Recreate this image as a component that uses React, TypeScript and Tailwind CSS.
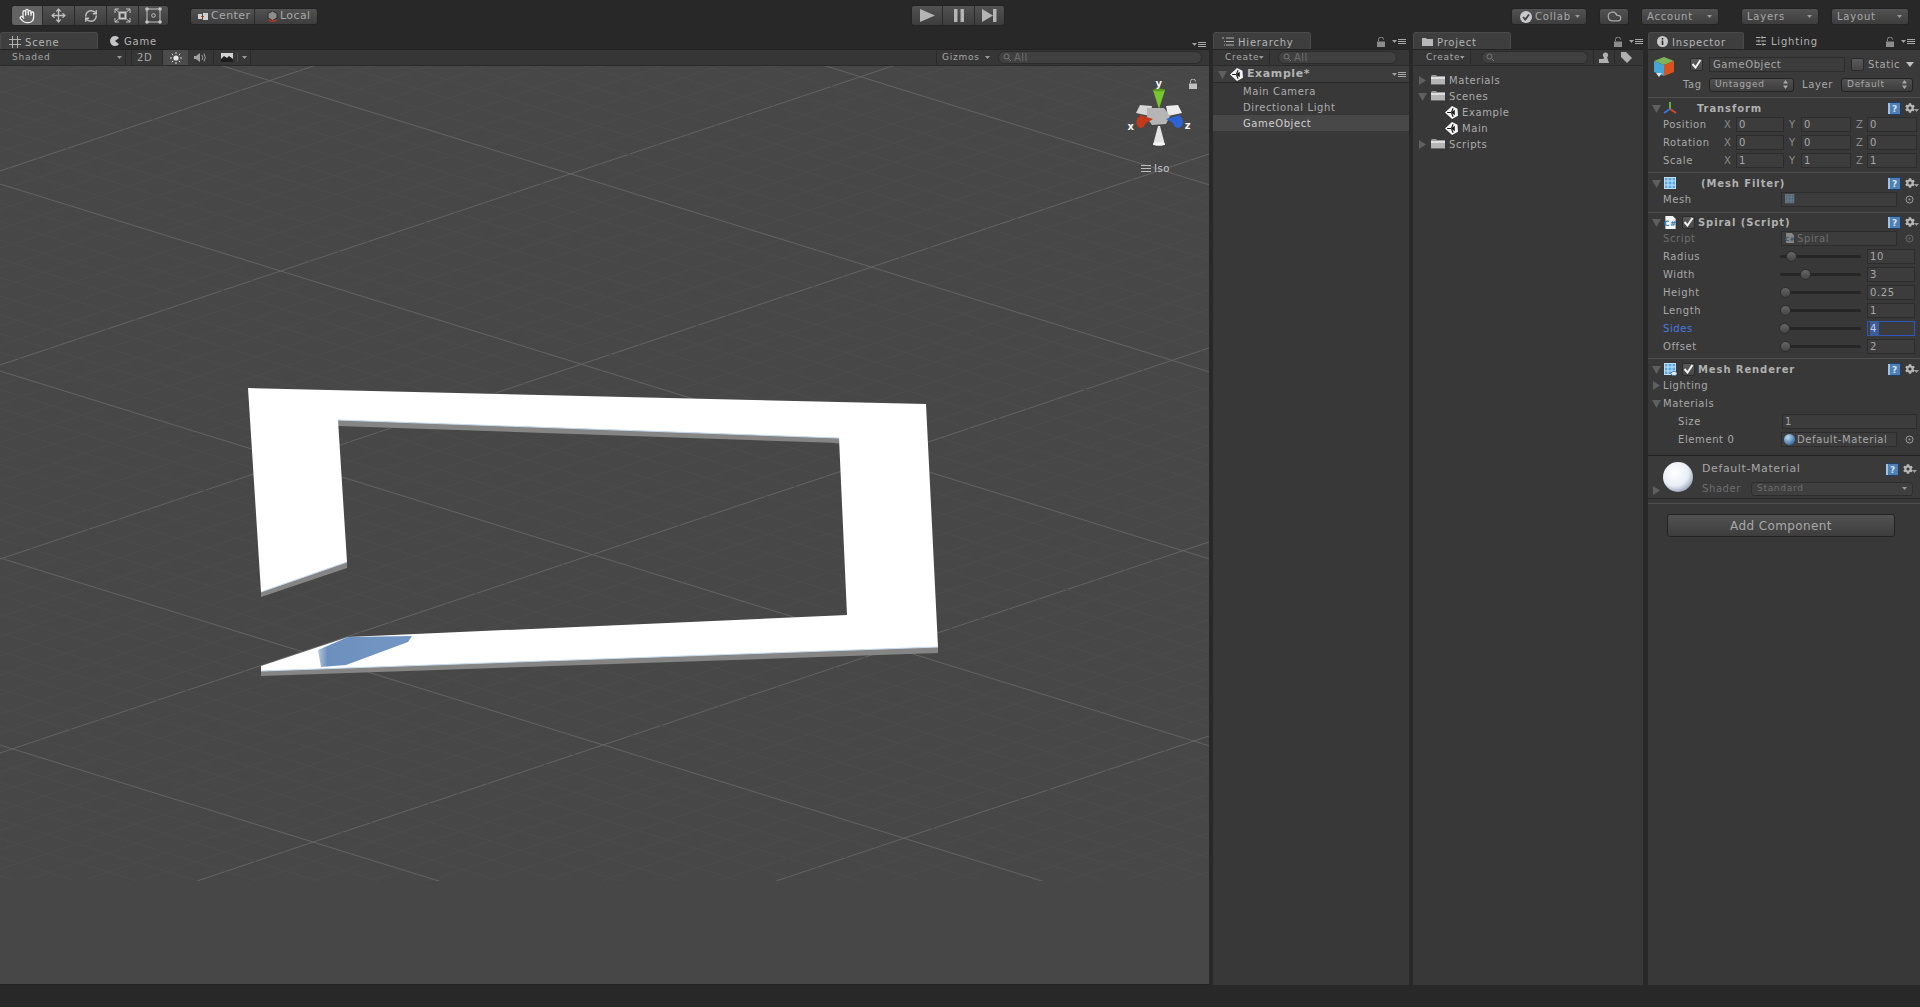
import React from 'react';
import { Hand, Move, RefreshCw, Cloud, SlidersHorizontal } from 'lucide-react';
import { FaCog } from 'react-icons/fa';

const btn = 'bg-gradient-to-b from-[#525252] to-[#3d3d3d] border border-[#232323] rounded-[3px]';

const LockIcon = ({ color = '#8c8c8c' }: { color?: string }) => (
  <svg width="8" height="10" viewBox="0 0 8 10">
    <path d="M1.5 4V2.5a2.5 2.5 0 0 1 5 0" fill="none" stroke={color} strokeWidth="1" />
    <rect x="0" y="4.5" width="8" height="5.5" fill={color} />
  </svg>
);

const MenuIcon = () => (
  <svg width="14" height="7" viewBox="0 0 14 7">
    <polygon points="0,2 5,2 2.5,5" fill="#a0a0a0" />
    <rect x="6" y="1" width="8" height="1" fill="#a8a8a8" />
    <rect x="6" y="3" width="8" height="1" fill="#a8a8a8" />
    <rect x="6" y="5" width="8" height="1" fill="#a8a8a8" />
  </svg>
);

const Caret = ({ className = '' }: { className?: string }) => (
  <svg width="5" height="3" viewBox="0 0 5 3" className={className}>
    <polygon points="0,0 5,0 2.5,3" fill="#9a9a9a" />
  </svg>
);

const UpDown = () => (
  <svg width="5" height="9" viewBox="0 0 5 9" className="ml-auto shrink-0">
    <polygon points="2.5,0 5,3.5 0,3.5" fill="#a8a8a8" />
    <polygon points="0,5.5 5,5.5 2.5,9" fill="#a8a8a8" />
  </svg>
);

const Arrow = ({ open = false }: { open?: boolean }) => (
  <svg width="9" height="9" viewBox="0 0 9 9" className="shrink-0">
    {open ? <polygon points="0,1 9,1 4.5,9" fill="#5f5f5f" /> : <polygon points="1,0 8,4.5 1,9" fill="#5f5f5f" />}
  </svg>
);

const UnityIcon = () => (
  <svg width="13" height="13" viewBox="0 0 24 24" className="shrink-0">
    <polygon points="13,0 23,5 24,18 13,24 0,12" fill="#f4f4f4" />
    <polygon points="11,12 18,7 18,17" fill="#161616" />
    <path d="M12 11 L15 4 M12 13 L15 20 M4 12 H11" stroke="#161616" strokeWidth="2" />
  </svg>
);

const FolderIcon = () => (
  <svg width="14" height="12" viewBox="0 0 14 12" className="shrink-0">
    <path d="M0 2 L1 1 H5 L6 2 H14 V3 H0Z" fill="#9a9a9a" />
    <rect x="0" y="3" width="14" height="8" fill="#b5b5b5" />
    <rect x="0" y="3" width="14" height="2" fill="#e0e0e0" />
    <rect x="0" y="10" width="14" height="1" fill="#6c6c6c" />
  </svg>
);

const HelpIcon = () => (
  <svg width="13" height="13" viewBox="0 0 13 13" className="shrink-0">
    <rect x="0" y="0" width="13" height="13" rx="1" fill="#1f3f68" />
    <rect x="2" y="1" width="10" height="11" fill="#4f7fb4" />
    <rect x="0" y="1" width="2" height="11" fill="#9fc2e4" />
    <text x="7" y="10" fontSize="9" fontWeight="700" fill="#d5e4f2" textAnchor="middle">?</text>
  </svg>
);

const Gear = () => (
  <div className="flex items-end w-[14px] shrink-0">
    <FaCog size={10} color="#b8b8b8" />
    <Caret className="mb-[1px] -ml-[1px]" />
  </div>
);

const CheckBox = ({ checked = true, className = '' }: { checked?: boolean; className?: string }) => (
  <div className={`w-[13px] h-[13px] shrink-0 rounded-[2px] bg-gradient-to-b from-[#5a5a5a] to-[#474747] border border-[#2a2a2a] flex items-center justify-center ${className}`}>
    {checked && (
      <svg width="11" height="10" viewBox="0 0 11 10">
        <path d="M1.5 5 L4.5 8.5 L9.5 1" fill="none" stroke="#f0f0f0" strokeWidth="2" />
      </svg>
    )}
  </div>
);

const CubeIcon = () => (
  <svg width="21" height="22" viewBox="0 0 21 22">
    <polygon points="10,0 20,4 10,8 0,4" fill="#7fb35a" />
    <polygon points="0,4 10,8 10,19 0,15" fill="#45a7d8" />
    <polygon points="10,8 20,4 20,15 10,19" fill="#d8531f" />
    <polygon points="2,16 8,16 5,20" fill="#e0e0e0" />
  </svg>
);

const TransformIcon = () => (
  <svg width="14" height="14" viewBox="0 0 14 14" className="shrink-0">
    <path d="M7 8 V1" stroke="#63b33a" strokeWidth="2" />
    <path d="M7 8 L13 12" stroke="#d24a26" strokeWidth="2" />
    <path d="M7 8 L1 12" stroke="#3f6fd8" strokeWidth="2" />
  </svg>
);

const MeshIcon = ({ eye = false, size = 13, className = '' }: { eye?: boolean; size?: number; className?: string }) => (
  <svg width={size} height={size} viewBox="0 0 13 13" className={`shrink-0 ${className}`}>
    <rect x="0.5" y="0.5" width="11" height="11" fill="#5aa6dc" stroke="#b9def5" />
    <path d="M4 1V11M8 1V11M1 4H11M1 8H11" stroke="#c6e6fa" strokeWidth="1" />
    {eye && <ellipse cx="10" cy="10.5" rx="3" ry="2" fill="#e8f4fc" stroke="#2f5f88" strokeWidth="0.7" />}
  </svg>
);

const ScriptIcon = ({ size = 13, className = '' }: { size?: number; className?: string }) => (
  <svg width={size} height={size} viewBox="0 0 13 14" className={`shrink-0 ${className}`}>
    <path d="M1 0 H9 L12 3 V14 H1Z" fill="#f4f4f4" />
    <text x="6.5" y="11" fontSize="8" fontWeight="700" fill="#2f7fb8" textAnchor="middle">C#</text>
  </svg>
);

const TargetDot = ({ dim = false }: { dim?: boolean }) => (
  <svg width="9" height="9" viewBox="0 0 9 9" className={dim ? 'shrink-0 opacity-50' : 'shrink-0'}>
    <circle cx="4.5" cy="4.5" r="3.5" fill="none" stroke="#a0a0a0" />
    <circle cx="4.5" cy="4.5" r="1" fill="#a0a0a0" />
  </svg>
);

const TopButton = ({ label, w, ml, icon }: { label: string; w: string; ml: string; icon?: React.ReactNode }) => (
  <div className={`${btn} ${w} ${ml} h-[17px] mt-[8px] flex items-center pl-[5px] pr-[6px] text-[#a8a8a8] tracking-[0.8px]`}>
    {icon}
    <span>{label}</span>
    <Caret className="ml-auto" />
  </div>
);

const Tab = ({ label, icon, active = false, w = 'w-[98px]' }: { label: string; icon: React.ReactNode; active?: boolean; w?: string }) => (
  <div className={`${w} h-[17px] flex items-center gap-[4px] pl-[8px] pt-[1px] text-[#b4b4b4] tracking-[0.8px] rounded-t-[3px] ${active ? 'bg-[#3e3e3e] border-t border-x border-[#4a4a4a]' : ''}`}>
    {icon}
    <span className="pt-[1px]">{label}</span>
  </div>
);

const Search = ({ className, children }: { className: string; children?: React.ReactNode }) => (
  <div className={`h-[13px] rounded-full bg-[#404040] border border-[#2b2b2b] flex items-center pl-[4px] gap-[1px] text-[#6f6f6f] ${className}`}>
    <svg width="10" height="9" viewBox="0 0 10 9" className="shrink-0">
      <circle cx="3.5" cy="3.5" r="2.5" fill="none" stroke="#7a7a7a" />
      <path d="M5.5 5.5 L8 8" stroke="#7a7a7a" />
    </svg>
    {children}
  </div>
);

const PanelHead = ({ tabs, pr = 'pr-[3px]' }: { tabs: React.ReactNode; pr?: string }) => (
  <div className={`h-[17px] flex items-center shrink-0 bg-[#282828] ${pr}`}>
    {tabs}
    <div className="ml-auto flex items-center gap-[7px] pt-[2px]">
      <LockIcon />
      <MenuIcon />
    </div>
  </div>
);

const Toolbar = ({ children }: { children: React.ReactNode }) => (
  <div className="h-[17px] shrink-0 flex items-center bg-[#363636] border-t border-[#222] border-b-[1px] border-b-[#2a2a2a] text-[#a6a6a6] text-[9px] tracking-[0.75px]">
    {children}
  </div>
);

// scene grid is a perspective floor, flattened to two line families
const SLOPE_A = -0.335;
const SLOPE_B = 0.31;

const GridLines = () => {
  const lines: React.ReactNode[] = [];
  for (let i = -60; i < 110; i++) {
    const c = 171 + i * 19.4;
    const major = i % 10 === 0;
    lines.push(
      <line key={`a${i}`} x1="0" y1={c} x2="1209" y2={c + SLOPE_A * 1209} stroke={major ? '#646464' : '#4c4c4c'} />
    );
  }
  for (let i = -60; i < 110; i++) {
    const c = -3 + i * 18.7;
    const major = i % 10 === 0;
    lines.push(
      <line key={`b${i}`} x1="0" y1={c} x2="1209" y2={c + SLOPE_B * 1209} stroke={major ? '#646464' : '#4c4c4c'} />
    );
  }
  return <g clipPath="url(#floor)">{lines}</g>;
};

const SpiralMesh = () => (
  <g>
    <defs>
      <linearGradient id="shade" x1="0" x2="1" y1="0" y2="0">
        <stop offset="0" stopColor="#b4c6de" />
        <stop offset="0.1" stopColor="#6d8fbd" />
        <stop offset="1" stopColor="#7397c4" />
      </linearGradient>
    </defs>
    {/* under edges */}
    <polygon points="338,420 839,438 839,443 338,426" fill="#858585" />
    <polygon points="261,592 347,562 347,568 261,597" fill="#858585" />
    <polygon points="261,671 938,647 938,653 261,676" fill="#858585" />
    {/* ribbon */}
    <polygon
      points="248,388 926,404 938,647 261,671 261,666 348,637 847,615 839,438 338,420 347,562 261,592"
      fill="#ffffff"
    />
    <line x1="338" y1="420" x2="839" y2="438" stroke="#c8dcf0" />
    <line x1="261" y1="592" x2="347" y2="562" stroke="#c8dcf0" />
    <line x1="261" y1="671" x2="938" y2="647" stroke="#c8dcf0" />
    {/* shadow on bottom strip */}
    <polygon points="348,637 412,636 408,642 346,665 321,667 318,650" fill="url(#shade)" />
  </g>
);

const Gizmo = () => (
  <svg width="70" height="70" viewBox="1125 78 70 70" className="absolute left-[1125px] top-[12px]">
    <polygon points="1140,105 1152,106 1150,116 1136,113" fill="#d6d6d6" />
    <polygon points="1178,105 1166,106 1168,116 1182,113" fill="#ececec" />
    <polygon points="1153,90 1165,90 1159,109" fill="#79c52f" />
    <ellipse cx="1159" cy="90" rx="6" ry="1.5" fill="#5a9b24" />
    <polygon points="1153,145 1165,145 1160,126 1158,126" fill="#e4e4e4" />
    <ellipse cx="1159" cy="144" rx="6" ry="1.8" fill="#f5f5f5" />
    <polygon points="1147,108 1164,108 1170,116 1166,124 1152,125 1147,118" fill="#b5b5b5" />
    <polygon points="1153,119 1140,115 1140,127" fill="#c23a1c" />
    <ellipse cx="1141" cy="122" rx="4.5" ry="6" fill="#c23a1c" />
    <polygon points="1166,119 1180,115 1180,127" fill="#2d63d0" />
    <ellipse cx="1178" cy="122" rx="5" ry="6" fill="#2d63d0" />
    <text x="1159" y="87" fontSize="10" fontWeight="700" fill="#f4f4f4" textAnchor="middle">y</text>
    <text x="1131" y="130" fontSize="10" fontWeight="700" fill="#f4f4f4" textAnchor="middle">x</text>
    <text x="1188" y="129" fontSize="10" fontWeight="700" fill="#f4f4f4" textAnchor="middle">z</text>
  </svg>
);

const ScenePanel = () => (
  <div className="w-[1209px] flex flex-col shrink-0">
    <div className="h-[17px] flex shrink-0 bg-[#282828]">
      <Tab
        active
        label="Scene"
        icon={
          <svg width="12" height="12" viewBox="0 0 12 12">
            <path d="M3.5 0V12M8.5 0V12M0 3.5H12M0 8.5H12" stroke="#b0b0b0" />
          </svg>
        }
      />
      <div className="ml-[4px]">
        <Tab
          label="Game"
          icon={
            <svg width="10" height="10" viewBox="0 0 10 10">
              <path d="M9 2 A5 5 0 1 0 9 8 L5 5Z" fill="#c4c4c4" />
            </svg>
          }
        />
      </div>
      <div className="ml-auto pr-[3px] pt-[9px]"><MenuIcon /></div>
    </div>
    <Toolbar>
      <div className="w-[126px] h-full flex items-center pl-[12px] pr-[3px] border-r border-[#2a2a2a]">
        <span>Shaded</span>
        <Caret className="ml-auto" />
      </div>
      <div className="w-[32px] ml-[5px] h-full flex items-center pl-[5px] border-x border-[#2a2a2a] text-[10px]">2D</div>
      <div className="w-[25px] h-full flex items-center justify-center bg-[#4b4b4b]">
        <svg width="12" height="12" viewBox="0 0 12 12">
          <circle cx="6" cy="6" r="2.6" fill="#e6e6e6" />
          <path d="M6 0V2M6 10V12M0 6H2M10 6H12M1.8 1.8L3.2 3.2M8.8 8.8L10.2 10.2M1.8 10.2L3.2 8.8M8.8 3.2L10.2 1.8" stroke="#dcdcdc" />
        </svg>
      </div>
      <div className="w-[26px] h-full flex items-center justify-center border-r border-[#2a2a2a]">
        <svg width="13" height="11" viewBox="0 0 13 11">
          <path d="M0 4H2L6 1V10L2 7H0Z" fill="#a0a0a0" />
          <path d="M8 3Q9.5 5.5 8 8M10 1.5Q12.5 5.5 10 9.5" fill="none" stroke="#a0a0a0" />
        </svg>
      </div>
      <div className="w-[37px] h-full flex items-center pl-[7px] border-r border-[#2a2a2a]">
        <svg width="12" height="9" viewBox="0 0 12 9">
          <rect width="12" height="9" fill="#d2d2d2" />
          <path d="M0 9V6L3 3L6 5L8 3L12 6V9Z" fill="#1d1d1d" />
        </svg>
        <div className="w-px h-[9px] bg-[#4e4e4e] mx-[4px]" />
        <Caret />
      </div>
      <div className="ml-auto w-[54px] h-full flex items-center pl-[5px] border-l border-[#2a2a2a]">
        <span>Gizmos</span>
        <Caret className="ml-[5px]" />
      </div>
      <div className="ml-[8px] mr-[7px]"><Search className="w-[204px]"><span className="text-[10px] tracking-[0.4px]">All</span></Search></div>
    </Toolbar>
    <div className="relative flex-1 bg-[#474747] overflow-hidden border-b border-[#222]">
      <svg width="1209" height="919" viewBox="0 66 1209 919" className="block">
        <defs>
          <clipPath id="floor">
            <rect x="0" y="66" width="1209" height="815" />
          </clipPath>
        </defs>
        <GridLines />
        <SpiralMesh />
      </svg>
      <Gizmo />
      <div className="absolute left-[1189px] top-[13px]"><LockIcon color="#c0c0c0" /></div>
      <div className="absolute left-[1141px] top-[95px] flex items-center gap-[3px] text-[#c4c4c4]">
        <div className="w-[10px] h-[7px] border-y border-[#bdbdbd] flex items-center"><div className="w-full h-px bg-[#bdbdbd]" /></div>
        <span>Iso</span>
      </div>
    </div>
  </div>
);

const HierarchyPanel = () => (
  <div className="w-[196px] ml-[4px] flex flex-col shrink-0 bg-[#383838]">
    <PanelHead
      tabs={
        <Tab
          active
          label="Hierarchy"
          icon={
            <svg width="12" height="9" viewBox="0 0 12 9">
              <path d="M0 1H2M4 1H12M2 4.5H3M4 4.5H12M2 8H3M4 8H12" stroke="#b0b0b0" />
            </svg>
          }
        />
      }
    />
    <Toolbar>
      <div className="w-[57px] h-full flex items-center pl-[12px] pr-[5px] border-r border-[#2a2a2a]">
        <span>Create</span>
        <Caret className="ml-auto" />
      </div>
      <Search className="w-[119px] ml-[8px]"><span className="text-[10px] tracking-[0.4px]">All</span></Search>
    </Toolbar>
    <div className="h-[17px] pt-[1px] flex items-center pl-[5px] pr-[3px] bg-[#3d3d3d] border-b border-[#262626] text-[#b4b4b4]">
      <Arrow open />
      <div className="ml-[3px] mr-[4px]"><UnityIcon /></div>
      <span className="font-bold text-[11px]">Example*</span>
      <div className="ml-auto"><MenuIcon /></div>
    </div>
    {['Main Camera', 'Directional Light', 'GameObject'].map((name, i) => (
      <div key={name} className={`h-[16px] flex items-center pl-[30px] ${i === 2 ? 'bg-[#484848] text-[#cfcfcf]' : 'text-[#acacac]'}`}>
        {name}
      </div>
    ))}
  </div>
);

const ProjectRow = ({ label, open, leaf }: { label: string; open?: boolean; leaf?: boolean }) => (
  <div className={`h-[16px] flex items-center ${leaf ? 'pl-[32px] gap-[4px]' : 'pl-[5px] gap-[4px]'} text-[#acacac]`}>
    {leaf ? <UnityIcon /> : <Arrow open={open} />}
    {!leaf && <FolderIcon />}
    <span>{label}</span>
  </div>
);

const ProjectPanel = () => (
  <div className="w-[230px] ml-[4px] flex flex-col shrink-0 bg-[#383838]">
    <PanelHead
      pr="pr-[0px]"
      tabs={
        <Tab
          active
          label="Project"
          icon={
            <svg width="11" height="9" viewBox="0 0 11 9">
              <path d="M0 1H4L5 2H11V9H0Z" fill="#b8b8b8" />
            </svg>
          }
        />
      }
    />
    <Toolbar>
      <div className="w-[58px] h-full flex items-center pl-[13px] pr-[5px] border-r border-[#2a2a2a]">
        <span>Create</span>
        <Caret className="ml-auto" />
      </div>
      <Search className="w-[107px] ml-[10px]" />
      <div className="ml-[5px] w-[22px] h-full flex items-center justify-center border-x border-[#2a2a2a]">
        <svg width="11" height="11" viewBox="0 0 11 11">
          <circle cx="6.5" cy="3" r="2.6" fill="#b0b0b0" />
          <path d="M3 11L5 5H8L10 11Z" fill="#b0b0b0" />
          <rect x="0" y="7" width="4" height="4" fill="#b0b0b0" />
        </svg>
      </div>
      <div className="w-[22px] h-full flex items-center justify-center">
        <svg width="11" height="11" viewBox="0 0 11 11">
          <path d="M0 0H5L11 6L6 11L0 5Z" fill="#b0b0b0" />
        </svg>
      </div>
    </Toolbar>
    <div className="pt-[6px]">
      <ProjectRow label="Materials" />
      <ProjectRow label="Scenes" open />
      <ProjectRow label="Example" leaf />
      <ProjectRow label="Main" leaf />
      <ProjectRow label="Scripts" />
    </div>
  </div>
);

const Field = ({ value, className = '', dim = false }: { value?: React.ReactNode; className?: string; dim?: boolean }) => (
  <div className={`h-[15px] flex items-center px-[2px] bg-[#3c3c3c] border border-[#2c2c2c] ${dim ? 'text-[#6e6e6e]' : 'text-[#a8a8a8]'} ${className}`}>
    {value}
  </div>
);

const XYZ = ({ label, x, y, z }: { label: string; x: string; y: string; z: string }) => (
  <div className="h-[18px] flex items-center pl-[15px] text-[#a8a8a8]">
    <span className="w-[61px]">{label}</span>
    <span className="w-[12px] text-[#8c8c8c]">X</span>
    <Field value={x} className="w-[48px]" />
    <span className="w-[17px] pl-[5px] text-[#8c8c8c]">Y</span>
    <Field value={y} className="w-[50px]" />
    <span className="w-[16px] pl-[5px] text-[#8c8c8c]">Z</span>
    <Field value={z} className="w-[50px]" />
  </div>
);

const CompHeader = ({ icon, check, title, pt = 'pt-[3px]', h = 'h-[17px]', titleMl = 'ml-[20px]' }: { icon: React.ReactNode; check?: boolean; title: string; pt?: string; h?: string; titleMl?: string }) => (
  <div className={`${h} ${pt} flex items-center pl-[4px] pr-[1px]`}>
    <Arrow open />
    <div className="ml-[2px] w-[14px] flex justify-center">{icon}</div>
    {check && <CheckBox className="ml-[5px]" />}
    <span className={`font-bold text-[#b0b0b0] tracking-[0.9px] ${titleMl}`}>{title}</span>
    <div className="ml-auto flex items-center gap-[4px]">
      <HelpIcon />
      <Gear />
    </div>
  </div>
);

const ObjectRow = ({ label, value, dim = false, icon }: { label: string; value?: string; dim?: boolean; icon?: React.ReactNode }) => (
  <div className="h-[18px] flex items-center pl-[15px]">
    <span className={`w-[118px] ${dim ? 'text-[#6e6e6e]' : 'text-[#a8a8a8]'}`}>{label}</span>
    <Field
      dim={dim}
      className="w-[116px]"
      value={
        <span className="flex items-center gap-[2px] pl-[1px]">
          {icon}
          {value}
        </span>
      }
    />
    <div className="ml-[8px]"><TargetDot dim={dim} /></div>
  </div>
);

const SliderRow = ({ label, value, thumb, selected = false }: { label: string; value: string; thumb: number; selected?: boolean }) => (
  <div className="h-[18px] flex items-center pl-[15px]">
    <span className={`w-[117px] ${selected ? 'text-[#4a78e0]' : 'text-[#a8a8a8]'}`}>{label}</span>
    <div className="relative w-[81px] h-[3px] rounded-full bg-[#262626]">
      <div
        className="absolute top-[-4px] w-[11px] h-[11px] rounded-full bg-gradient-to-b from-[#666] to-[#454545] border border-[#2c2c2c]"
        style={{ left: thumb }}
      />
    </div>
    <Field
      className={`w-[48px] ml-[6px] ${selected ? 'border-[#2f55c0]' : ''}`}
      value={selected ? <span className="bg-[#3c5c9c] text-[#c4cfe4] pr-[2px]">{value}</span> : value}
    />
  </div>
);

const PlainRow = ({ label, value, open, arrow = false }: { label: string; value?: string; open?: boolean; arrow?: boolean }) => (
  <div className="h-[18px] flex items-center pl-[4px] text-[#a8a8a8]">
    {arrow ? <Arrow open={open} /> : <div className="w-[9px]" />}
    <span className={arrow ? 'ml-[2px]' : 'ml-[17px] w-[104px]'}>{label}</span>
    {value && <Field value={value} className="w-[135px]" />}
  </div>
);

const MaterialDot = () => (
  <svg width="11" height="11" viewBox="0 0 11 11" className="shrink-0">
    <defs>
      <radialGradient id="dot" cx="0.35" cy="0.3" r="0.8">
        <stop offset="0" stopColor="#b9dcf4" />
        <stop offset="1" stopColor="#2c5f94" />
      </radialGradient>
    </defs>
    <circle cx="5.5" cy="5.5" r="5.5" fill="url(#dot)" />
  </svg>
);

const InspectorPanel = () => (
  <div className="w-[272px] ml-[5px] flex flex-col shrink-0 bg-[#383838]">
    <div className="h-[17px] flex items-center shrink-0 bg-[#282828] pr-[5px]">
      <Tab
        active
        w="w-[96px]"
        label="Inspector"
        icon={
          <svg width="11" height="11" viewBox="0 0 11 11">
            <circle cx="5.5" cy="5.5" r="5.5" fill="#c8c8c8" />
            <rect x="4.7" y="2" width="1.6" height="1.6" fill="#282828" />
            <rect x="4.7" y="4.5" width="1.6" height="4.5" fill="#282828" />
          </svg>
        }
      />
      <div className="ml-[3px]">
        <Tab label="Lighting" w="w-[100px]" icon={<SlidersHorizontal size={12} color="#b4b4b4" />} />
      </div>
      <div className="ml-auto flex items-center gap-[7px] pt-[2px]">
        <LockIcon />
        <MenuIcon />
      </div>
    </div>
    {/* object header */}
    <div className="h-[49px] shrink-0 border-t border-[#222] border-b border-b-[#505050] flex pl-[6px] bg-[#3a3a3a]">
      <div className="pt-[7px]"><CubeIcon /></div>
      <div className="ml-[8px] flex flex-col">
        <div className="flex items-center h-[14px] mt-[7px] pl-[7px]">
          <CheckBox />
          <div className="w-[136px] h-[15px] ml-[6px] flex items-center px-[3px] bg-[#3c3c3c] border border-[#2c2c2c] text-[#a8a8a8]">GameObject</div>
          <CheckBox checked={false} className="ml-[6px]" />
          <span className="ml-[4px] text-[#a8a8a8]">Static</span>
          <svg width="8" height="5" viewBox="0 0 8 5" className="ml-[6px]"><polygon points="0,0 8,0 4,5" fill="#c0c0c0" /></svg>
        </div>
        <div className="flex items-center mt-[6px] text-[#a8a8a8]">
          <span className="w-[20px]">Tag</span>
          <div className={`${btn} w-[85px] h-[14px] ml-[6px] flex items-center px-[5px] text-[9px] tracking-[0.7px]`}>
            <span>Untagged</span>
            <UpDown />
          </div>
          <span className="ml-[8px] w-[31px]">Layer</span>
          <div className={`${btn} w-[72px] h-[14px] ml-[8px] flex items-center px-[5px] text-[9px] tracking-[0.7px]`}>
            <span>Default</span>
            <UpDown />
          </div>
        </div>
      </div>
    </div>
    {/* transform */}
    <div className="pb-[3px]">
      <CompHeader icon={<TransformIcon />} title="Transform" />
      <XYZ label="Position" x="0" y="0" z="0" />
      <XYZ label="Rotation" x="0" y="0" z="0" />
      <XYZ label="Scale" x="1" y="1" z="1" />
    </div>
    <div className="border-t border-[#505050] pb-[4px]">
      <CompHeader icon={<MeshIcon />} title="(Mesh Filter)" titleMl="ml-[24px]" />
      <ObjectRow label="Mesh" icon={<MeshIcon size={10} className="opacity-40" />} />
    </div>
    <div className="border-t border-[#505050] pb-[3px]">
      <CompHeader icon={<ScriptIcon />} check title="Spiral (Script)" pt="pt-[2px]" h="h-[16px]" titleMl="ml-[3px]" />
      <ObjectRow label="Script" value="Spiral" dim icon={<ScriptIcon size={10} className="opacity-40" />} />
      <SliderRow label="Radius" value="10" thumb={6} />
      <SliderRow label="Width" value="3" thumb={20} />
      <SliderRow label="Height" value="0.25" thumb={0} />
      <SliderRow label="Length" value="1" thumb={0} />
      <SliderRow label="Sides" value="4" thumb={-1} selected />
      <SliderRow label="Offset" value="2" thumb={0} />
    </div>
    <div className="border-t border-[#505050] pb-[7px]">
      <CompHeader icon={<MeshIcon eye />} check title="Mesh Renderer" titleMl="ml-[3px]" />
      <PlainRow label="Lighting" arrow />
      <PlainRow label="Materials" arrow open />
      <PlainRow label="Size" value="1" />
      <div className="h-[18px] flex items-center pl-[30px] text-[#a8a8a8]">
        <span className="w-[103px]">Element 0</span>
        <Field
          className="w-[116px]"
          value={
            <span className="flex items-center gap-[2px]">
              <MaterialDot />
              Default-Material
            </span>
          }
        />
        <div className="ml-[8px]"><TargetDot /></div>
      </div>
    </div>
    {/* material */}
    <div className="h-[44px] border-t border-[#222] border-b border-b-[#262626] bg-[#3a3a3a] flex pl-[4px]">
      <div className="w-[9px] pt-[30px]"><Arrow /></div>
      <svg width="30" height="30" viewBox="0 0 30 30" className="ml-[2px] mt-[6px] shrink-0">
        <defs>
          <radialGradient id="ball" cx="0.4" cy="0.35" r="0.75">
            <stop offset="0" stopColor="#ffffff" />
            <stop offset="0.6" stopColor="#e9eef6" />
            <stop offset="1" stopColor="#7f8fa6" />
          </radialGradient>
        </defs>
        <circle cx="15" cy="15" r="15" fill="url(#ball)" />
      </svg>
      <div className="ml-[9px] flex-1 flex flex-col pr-[3px]">
        <div className="h-[25px] pt-[1px] flex items-center text-[#a8a8a8] text-[11px]">
          <span>Default-Material</span>
          <div className="ml-auto flex items-center gap-[4px]"><HelpIcon /><Gear /></div>
        </div>
        <div className="flex items-center text-[#6e6e6e]">
          <span className="w-[49px]">Shader</span>
          <div className="w-[162px] h-[14px] bg-[#3f3f3f] border border-[#2d2d2d] rounded-[3px] flex items-center px-[5px] text-[9px] tracking-[0.7px]">
            <span>Standard</span>
            <Caret className="ml-auto" />
          </div>
        </div>
      </div>
    </div>
    <div className="h-[5px] border-b border-[#505050]" />
    <div className="pt-[10px] pl-[19px]">
      <div className={`${btn} w-[228px] h-[23px] flex items-center justify-center text-[12px] tracking-[0.4px] text-[#a8a8a8]`}>Add Component</div>
    </div>
  </div>
);

export default function App() {
  return (
    <div className="w-[1920px] h-[1007px] overflow-hidden flex flex-col bg-[#282828] [font-family:'DejaVu_Sans',sans-serif] text-[10px] tracking-[0.6px]">
      {/* top toolbar */}
      <div className="h-[32px] flex shrink-0">
        <div className={`${btn} ml-[11px] mt-[5px] h-[21px] flex w-[158px] text-[#c0c0c0]`}>
          <div className="w-[31px] flex items-center justify-center bg-[#636363] rounded-l-[3px] border-r border-[#2a2a2a]"><Hand size={16} color="#f0f0f0" /></div>
          <div className="w-[32px] flex items-center justify-center border-r border-[#2a2a2a]"><Move size={15} strokeWidth={2.2} /></div>
          <div className="w-[32px] flex items-center justify-center border-r border-[#2a2a2a]"><RefreshCw size={14} strokeWidth={2.5} /></div>
          <div className="w-[32px] flex items-center justify-center border-r border-[#2a2a2a]">
            <svg width="17" height="15" viewBox="0 0 17 15">
              <rect x="5.5" y="4.5" width="6" height="6" fill="none" stroke="#c4c4c4" strokeWidth="2" />
              <path d="M1 5V1H5M12 1H16V5M16 10V14H12M5 14H1V10M1 1L4.5 4M16 1L12.5 4M16 14L12.5 11M1 14L4.5 11" fill="none" stroke="#c4c4c4" />
            </svg>
          </div>
          <div className="flex-1 flex items-center justify-center">
            <svg width="17" height="17" viewBox="0 0 17 17">
              <rect x="2" y="2" width="13" height="13" fill="none" stroke="#c4c4c4" />
              <circle cx="2" cy="2" r="1.8" fill="#c4c4c4" />
              <circle cx="15" cy="2" r="1.8" fill="#c4c4c4" />
              <circle cx="2" cy="15" r="1.8" fill="#c4c4c4" />
              <circle cx="15" cy="15" r="1.8" fill="#c4c4c4" />
              <circle cx="8.5" cy="8.5" r="1.8" fill="none" stroke="#c4c4c4" />
            </svg>
          </div>
        </div>
        <div className={`${btn} ml-[21px] mt-[8px] h-[17px] flex w-[128px] text-[#a8a8a8] text-[11px] tracking-[0.4px]`}>
          <div className="w-[64px] flex items-center pl-[7px] gap-[3px] border-r border-[#2a2a2a]">
            <svg width="10" height="7" viewBox="0 0 10 7">
              <rect x="0" y="1" width="4" height="5" fill="#d0d0d0" />
              <rect x="5" y="0" width="5" height="7" fill="#d0d0d0" />
              <rect x="3" y="3" width="3" height="1" fill="#c23a1c" />
            </svg>
            <span>Center</span>
          </div>
          <div className="flex-1 flex items-center pl-[12px] gap-[2px]">
            <svg width="11" height="11" viewBox="0 0 11 11">
              <polygon points="5.5,0 10,2.5 10,7 5.5,9.5 1,7 1,2.5" fill="#8c8c8c" stroke="#2a2a2a" />
              <path d="M1 8.5 Q5.5 12 10 8.5" fill="none" stroke="#c2352a" strokeWidth="1.3" />
            </svg>
            <span>Local</span>
          </div>
        </div>
        <div className={`${btn} ml-[593px] mt-[5px] h-[21px] flex w-[94px]`}>
          <div className="w-[31px] flex items-center justify-center border-r border-[#2a2a2a]">
            <svg width="15" height="13" viewBox="0 0 15 13"><polygon points="0,0 15,6.5 0,13" fill="#b4b4b4" /></svg>
          </div>
          <div className="w-[32px] flex items-center justify-center border-r border-[#2a2a2a]">
            <svg width="10" height="13" viewBox="0 0 10 13"><rect width="3.5" height="13" fill="#b4b4b4" /><rect x="6.5" width="3.5" height="13" fill="#b4b4b4" /></svg>
          </div>
          <div className="flex-1 flex items-center justify-center">
            <svg width="15" height="13" viewBox="0 0 15 13"><polygon points="0,0 11,6.5 0,13" fill="#b4b4b4" /><rect x="11" width="3.5" height="13" fill="#b4b4b4" /></svg>
          </div>
        </div>
        <TopButton
          label="Collab"
          w="w-[76px]"
          ml="ml-[506px]"
          icon={
            <svg width="12" height="12" viewBox="0 0 12 12" className="mr-[3px] ml-[3px]">
              <circle cx="6" cy="6" r="6" fill="#c8c8c8" />
              <path d="M3 6 L5.3 8.5 L9 3.5" fill="none" stroke="#3e3e3e" strokeWidth="1.8" />
            </svg>
          }
        />
        <div className={`${btn} w-[30px] ml-[12px] h-[17px] mt-[8px] flex items-center justify-center`}>
          <Cloud size={15} color="#a8a8a8" />
        </div>
        <TopButton label="Account" w="w-[78px]" ml="ml-[12px]" />
        <TopButton label="Layers" w="w-[78px]" ml="ml-[22px]" />
        <TopButton label="Layout" w="w-[78px]" ml="ml-[12px]" />
      </div>
      {/* panels */}
      <div className="flex-1 flex min-h-0">
        <ScenePanel />
        <HierarchyPanel />
        <ProjectPanel />
        <InspectorPanel />
      </div>
      <div className="h-[22px] shrink-0 bg-[#282828]" />
    </div>
  );
}
